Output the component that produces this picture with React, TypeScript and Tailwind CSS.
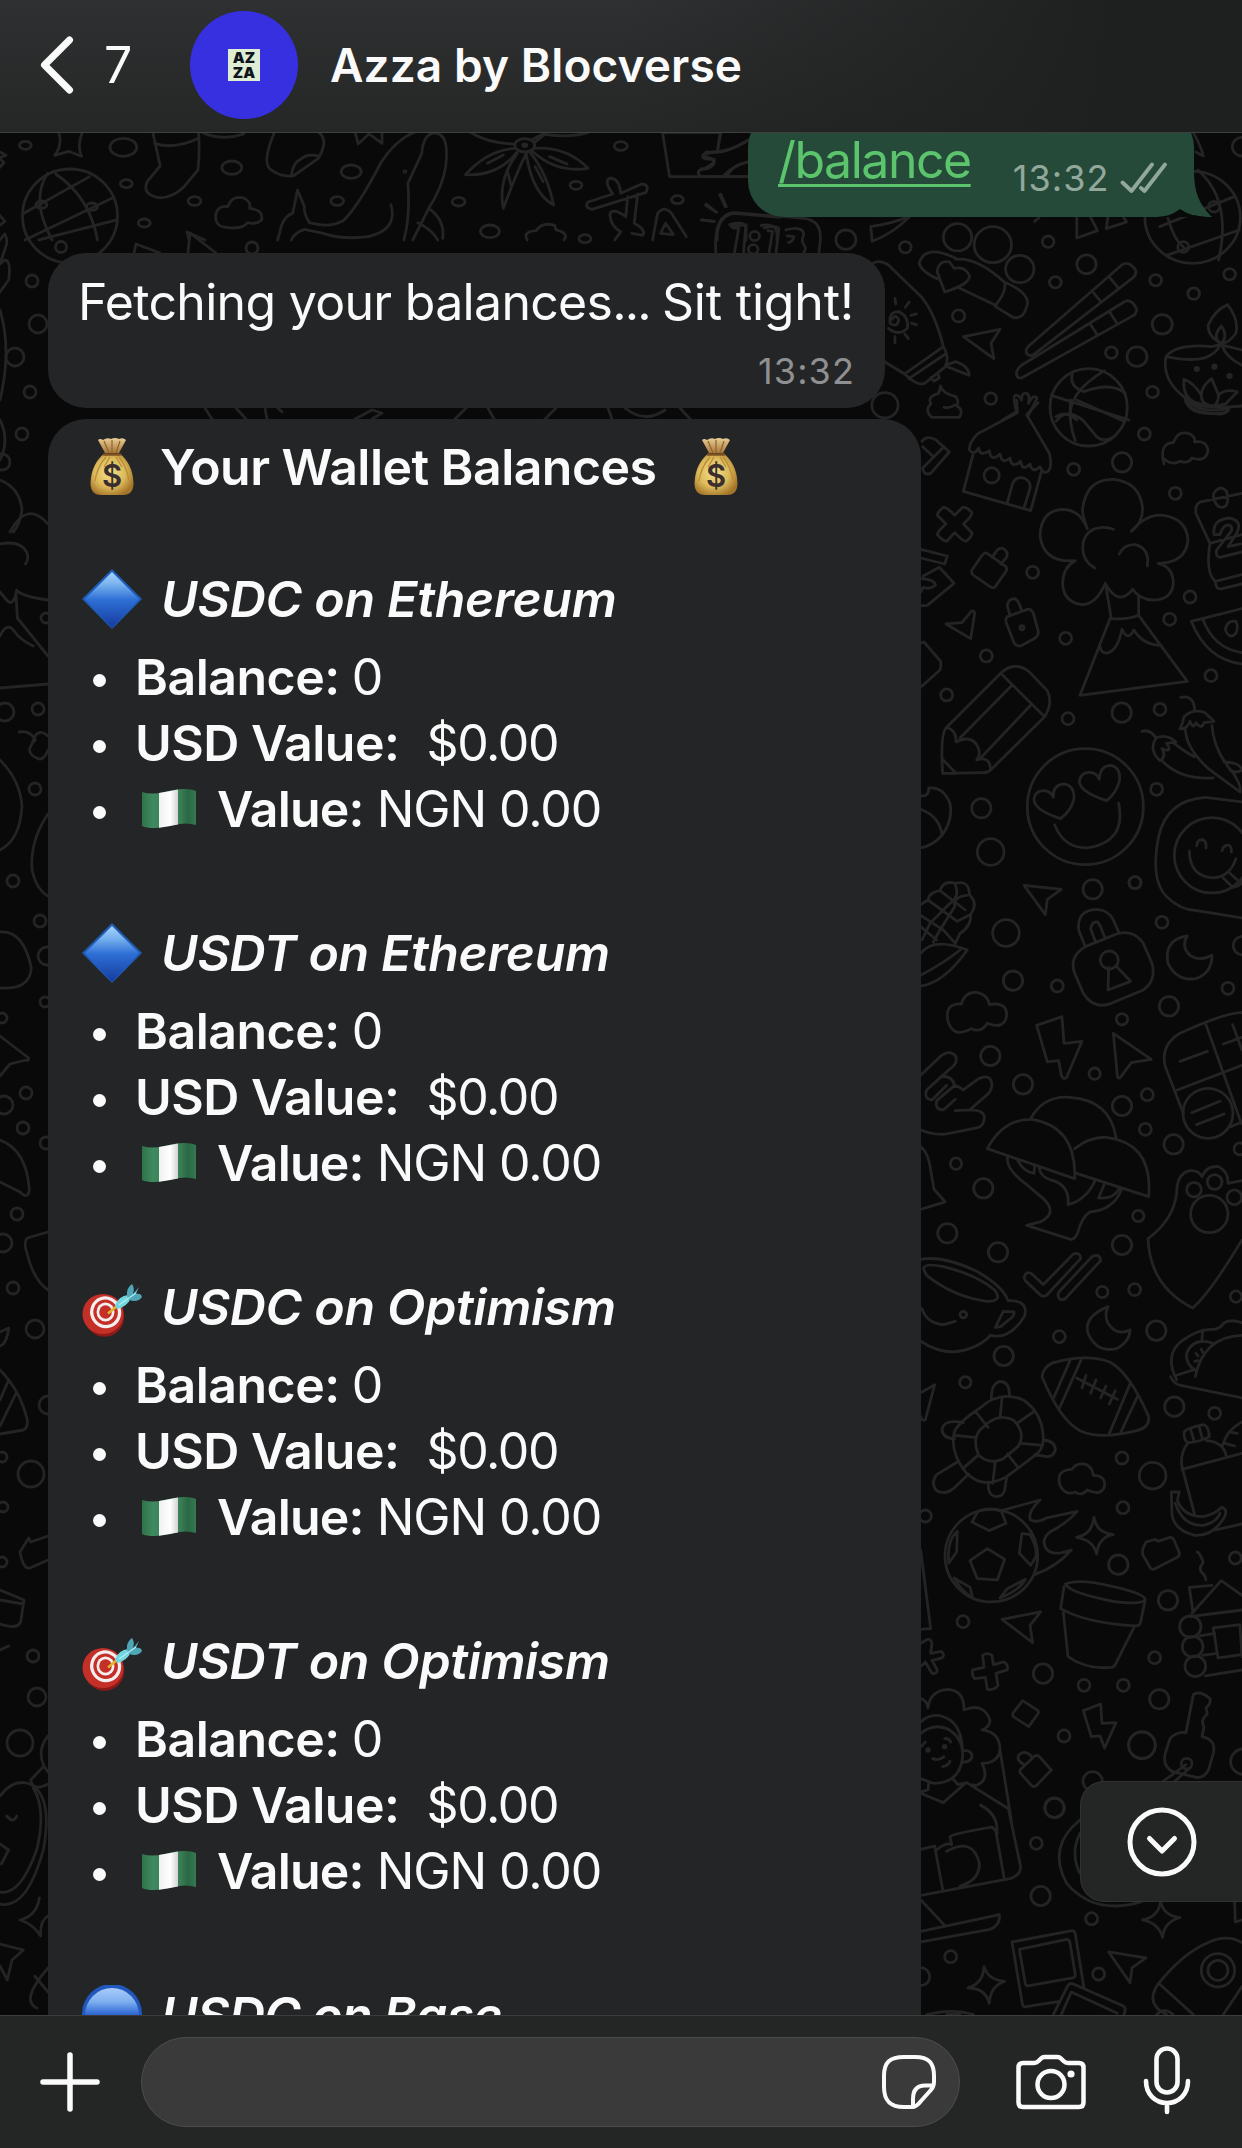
import React from 'react';

interface Holding {
  title: string;
  icon: 'diamond' | 'target' | 'circle';
  tracking: string;
}

interface DoodleGroupProps {
  transform: string;
  paths: string[];
  circles: number[][];
}

const holdings: Holding[] = [
  { title: 'USDC on Ethereum', icon: 'diamond', tracking: 'tracking-[-0.3px]' },
  { title: 'USDT on Ethereum', icon: 'diamond', tracking: 'tracking-[-0.4px]' },
  { title: 'USDC on Optimism', icon: 'target', tracking: 'tracking-[-0.3px]' },
  { title: 'USDT on Optimism', icon: 'target', tracking: 'tracking-[-0.35px]' },
  { title: 'USDC on Base', icon: 'circle', tracking: 'tracking-[-0.7px]' },
];

// Wallpaper doodles, one group per area of the chat background
const doodles: DoodleGroupProps[] = [
  {
    // top left
    transform: 'scale(.4974 .3333)',
    paths: [
      'M118 396Q126 435 110 466L138 454L164 469Q154 435 166 396',
      'M-6 450L12 466L-2 474L8 488L-6 512M-4 640L10 664L-6 682',
      'M307 396L322 498L296 545Q284 585 322 594Q350 590 370 560L398 510Q402 450 399 396M311 430Q350 450 399 415M405 396Q445 425 490 402',
      'M552 396Q525 490 545 510Q565 532 590 528L640 475Q662 420 640 396M640 468Q618 460 604 478Q588 490 586 528',
      'M714 396L720 432L742 402L768 430L768 396',
      'M834 396Q795 420 765 490Q720 620 690 662Q660 685 622 668Q610 640 612 620L598 570Q592 620 588 640Q568 650 562 700L558 720M868 400Q905 390 896 500Q890 560 862 625L830 720M868 400Q850 410 848 460L820 550Q825 650 812 720M786 614Q800 690 740 710Q690 720 650 700L612 688Q590 700 586 720M862 625Q895 660 890 715M840 668Q870 690 880 720',
      'M1058 460Q1035 530 1012 625Q1000 540 1040 460M1066 458Q1100 520 1113 615Q1070 580 1058 462M1076 445Q1140 440 1182 505Q1120 520 1072 456M1036 445Q980 450 936 524Q1000 530 1040 456M1034 432Q980 430 945 396M1074 428L1095 403Q1150 415 1185 396M1068 420L1092 402M1020 512L1028 560M1076 500L1092 545M980 490L1012 465M1105 470L1140 492',
      'M1332 398L1346 530L1504 530M1332 398L1448 398L1442 455M1504 420Q1465 460 1420 456Q1400 480 1436 478Q1438 505 1410 508Q1400 515 1406 524M1504 486Q1475 495 1456 526',
      'M48 640L180 530M50 720L225 595M78 720L235 660M96 520Q60 600 105 720M112 522Q180 590 196 720',
      'M455 682Q430 680 434 640Q440 615 458 620Q466 585 490 594Q505 605 502 625Q530 630 526 660Q515 675 498 668Q485 690 455 682Z',
      'M376 696L380 720M376 696L412 720',
      'M1060 720Q1050 695 1078 692Q1090 665 1115 676L1118 690Q1145 700 1134 720',
      'M1225 535Q1245 532 1248 580L1290 552Q1308 556 1298 578L1190 628Q1174 622 1182 606L1232 582Q1214 545 1225 535ZM1262 590L1258 650Q1230 620 1226 644Q1228 680 1248 695L1236 720M1282 582L1275 670Q1300 690 1292 706L1270 700M1312 720L1322 640Q1335 615 1350 640L1380 710M1328 700L1338 670L1354 704Z',
      'M1420 612L1440 636M1447 584L1458 620M1410 660L1434 664M1442 720Q1440 650 1475 640L1568 652M1470 680L1500 674L1500 720M1530 676Q1560 670 1562 700L1562 720',
    ],
    circles: [[51, 436, 12], [248, 442, 27], [466, 503, 20], [706, 515, 20], [254, 551, 12], [391, 603, 13], [290, 669, 12], [678, 603, 13], [922, 605, 13], [985, 694, 19], [1158, 556, 12], [1362, 599, 12], [1248, 438, 13], [1055, 436, 20], [1055, 436, 4], [83, 614, 11], [185, 620, 11], [814, 515, 2], [1176, 716, 12]],
  },
  {
    // top right
    transform: 'translate(700) scale(.3457 .3333)',
    paths: [
      'M60 583L76 620M16 615L48 637M4 660L42 664M46 760Q38 640 100 638L300 655Q352 660 348 720L344 760M86 674Q130 662 132 684L126 756M96 684L112 684L100 756M186 684Q230 674 228 690L220 756M196 692L210 694L200 756M248 690Q300 676 300 705Q290 725 304 740Q306 752 300 758M252 708L272 710Q268 725 256 728',
      'M494 680Q560 670 606 648M494 680L498 724Q560 700 606 650',
      'M740 775Q650 730 634 790Q640 815 690 838M740 778Q800 770 880 846Q890 870 855 916L750 864M880 846Q960 880 945 920Q935 960 905 952L855 920M708 876L686 815Q690 780 722 786L735 805Q770 798 780 830Q775 855 708 876Z',
      'M1090 652L1090 714L1150 692L1130 652M1180 652L1175 686L1234 666L1225 652M968 664L980 654',
      'M944 1058Q940 1045 960 1030L1220 795Q1240 780 1260 810Q1264 825 1250 835L964 1065Q948 1070 944 1058ZM1186 834L1210 864M1138 878L1160 906M916 1125Q912 1112 930 1096L1230 904Q1250 896 1264 930L1258 944L930 1134Q918 1136 916 1125ZM1186 938L1206 970M1130 974L1150 1006',
      'M500 790Q520 778 545 795L640 890Q680 940 704 1040M704 1040L592 1122M710 1062L604 1136M704 1040Q722 1070 710 1100L650 1150Q630 1160 592 1122L535 1086M710 1096L740 1085Q780 1100 778 1126L715 1100M668 1132L676 1144L692 1134L688 1120',
      'M556 958Q565 940 575 960Q570 985 550 970Q545 935 575 935Q605 950 600 985Q575 1010 545 985M564 895L566 912M605 906L594 922M626 942L610 946M626 974L612 970M603 1016L592 1002M564 1010L564 1028',
      'M762 1010L868 988L842 1030L850 1076Z',
      'M696 1158Q700 1180 740 1190Q752 1210 740 1216Q765 1230 750 1252L670 1252Q648 1230 668 1212Q656 1190 690 1180ZM706 1222Q725 1226 735 1216',
      'M875 1260L915 1235Q905 1190 910 1188Q920 1180 930 1200Q930 1176 945 1180Q955 1185 950 1210Q965 1180 975 1195L948 1250',
      'M1016 1186L1240 1260M1078 1116Q1065 1160 1110 1175Q1190 1145 1230 1180M1170 1112Q1060 1180 1072 1260M1030 1250Q1060 1230 1090 1260',
      'M1526 914Q1560 960 1550 1000Q1530 1030 1508 1030Q1468 1010 1470 975Q1490 930 1526 914ZM1508 978Q1530 1010 1506 1032Q1480 1010 1508 978M1348 1070Q1380 1030 1480 1040L1504 1034L1568 1050M1348 1070Q1420 1085 1460 1074Q1495 1060 1504 1036M1510 1036Q1520 1070 1568 1096M1348 1070Q1335 1140 1402 1192Q1410 1240 1470 1240Q1530 1245 1530 1225M1400 1138Q1395 1190 1430 1206Q1480 1224 1520 1212L1554 1176Q1520 1165 1500 1185L1480 1136Q1450 1160 1450 1185Q1425 1145 1400 1138M1450 1185Q1450 1210 1470 1214M1500 1185Q1500 1205 1490 1214M1402 1192Q1440 1245 1530 1225',
      'M1428 400Q1450 440 1456 468L1434 456M1330 680L1545 590M1350 766L1560 690M1440 510Q1540 600 1500 780M1350 640Q1370 720 1398 740',
      'M0 530L140 530M60 400L50 456Q0 460 10 470Q50 475 36 490Q10 510 4 506M136 424Q70 460 50 456M136 486Q90 500 80 526',
    ],
    circles: [[422, 719, 29], [594, 742, 17], [745, 712, 41], [847, 734, 54], [925, 807, 41], [1007, 725, 17], [1118, 793, 28], [1028, 847, 17], [1318, 841, 17], [1532, 823, 17], [1428, 881, 17], [1337, 973, 29], [1264, 1070, 29], [1190, 1058, 17], [1309, 1176, 17], [841, 1196, 17], [748, 948, 18], [535, 1216, 38], [1425, 652, 138], [1487, 620, 16], [1398, 741, 16], [1568, 440, 28], [158, 708, 14], [154, 748, 14], [1437, 1107, 5], [1488, 1100, 5], [1532, 1128, 5]],
  },
  {
    // house, tree cloud, pencil and smileys
    transform: 'translate(900 400) scale(.3333)',
    paths: [
      'M350 0L352 38L232 102Q206 130 208 150Q222 168 236 144Q240 172 268 152Q272 188 300 162Q306 196 330 174Q334 208 362 184Q366 216 390 192Q396 222 420 200Q430 224 444 214Q458 200 448 160L380 44L414 8M220 160L190 274L392 332L424 216M322 308L338 250Q350 226 376 236Q394 248 390 266L372 324',
      'M468 64Q500 20 550 62L590 110Q610 128 640 112M512 0Q505 70 526 122M530 0L672 64',
      'M856 0Q870 40 960 42Q985 40 985 24M866 4Q900 30 1026 18',
      'M66 124Q80 104 108 120L148 156L92 220Q72 228 68 204L132 140M68 140L98 168',
      'M164 346L188 322Q200 320 216 338Q216 348 190 372L216 398Q216 410 198 424Q188 424 164 398L140 424Q130 424 112 404Q112 394 138 372L112 346Q112 336 130 322Q140 320 164 346Z',
      'M62 448L142 468L134 492L62 474M62 535Q108 540 106 556Q90 570 70 562L62 576M70 528L118 502L162 550L82 616L62 618',
      'M262 460L318 500Q322 508 318 514L286 560Q280 566 270 560L218 524Q212 516 216 510L246 466Q254 456 262 460ZM276 472L292 450Q308 436 320 456Q324 464 318 474L302 492',
      'M322 650L382 628Q394 626 400 640L415 694Q416 706 406 714L362 738Q350 740 342 728L318 666Q316 656 322 650ZM330 646L322 618Q324 596 344 596Q354 600 358 612L366 634',
      'M138 672L186 668L214 634Q222 630 224 640L212 716Z',
      'M62 730L72 726L122 784Q124 800 120 810L62 862',
      'M562 386Q545 340 548 325Q560 236 640 238Q720 246 728 325Q728 370 694 394Q740 340 790 346Q860 356 864 420Q858 490 774 490Q820 500 820 550Q816 600 758 600Q720 598 698 568Q655 622 616 550Q590 612 548 614Q488 606 488 548Q490 500 526 482Q430 490 420 406Q424 330 490 328Q540 330 562 386M640 388Q610 376 580 388Q548 405 548 445Q550 485 584 504M658 462Q672 432 706 434Q750 446 742 498M618 560L634 656Q680 660 716 646L716 586M630 656L540 886L862 844L716 646M600 740Q604 764 626 758Q654 748 666 688Q684 726 702 690Q730 736 784 736',
      'M1026 280L902 306Q884 312 888 340L930 430Q916 520 946 544Q946 570 966 566L1026 552M946 544L1026 524M930 430L1026 404M950 270Q966 256 980 275Q990 318 968 322Q948 325 940 290Q940 276 950 270M942 404Q936 360 986 354Q1030 360 1010 400L984 440L1022 432M942 404L960 404Q970 370 990 376Q1000 386 992 396L950 450Q946 470 960 472L1026 456',
      'M1026 626L874 664Q920 780 1026 792M908 656Q940 745 1026 758M976 690Q980 660 1008 664Q1016 680 1008 700Q990 720 976 690Z',
      'M128 1120Q120 1000 140 982L302 820Q344 780 388 816L442 872Q460 910 434 950L276 1106Q264 1118 250 1118ZM302 820L434 950M336 856L180 1014M392 916L240 1076M140 982Q170 990 168 1026Q210 1005 230 1034Q246 1060 230 1080Q270 1066 272 1110M126 1076L168 1120',
      'M792 192Q776 130 820 128Q836 88 870 102Q886 110 884 126Q920 120 924 152Q918 188 876 174Q866 192 840 184Q816 198 792 176',
      'M482 1256Q400 1230 402 1196Q406 1170 436 1172Q456 1178 460 1192Q458 1156 490 1152Q524 1156 522 1196Q514 1232 482 1256ZM620 1202Q540 1176 538 1144Q544 1112 576 1118Q594 1124 598 1138Q600 1096 634 1096Q664 1104 658 1144Q648 1180 620 1202ZM464 1274Q490 1344 562 1344Q680 1326 656 1210',
      'M842 892Q884 884 884 934M840 986Q850 970 852 950Q880 925 915 938L942 964L912 968Q906 990 888 968Q880 990 870 964Q860 990 840 986M856 990Q860 1050 930 1110L1020 1176Q1026 1160 1000 1120Q940 1050 936 976M726 994Q750 986 768 1014Q800 1000 828 1026L800 1030Q820 1060 786 1046Q800 1070 780 1082Q745 1050 768 1014M786 1082Q840 1140 940 1134M820 1028Q860 1060 884 1070M972 1086Q1020 1088 1026 1110Q1010 1122 990 1110',
      'M62 1188Q88 1190 86 1164Q130 1160 150 1210Q160 1260 126 1306Q100 1336 62 1344M62 1228Q120 1250 126 1306',
      'M1026 1206L916 1192Q800 1200 776 1310Q750 1440 800 1490Q840 1530 890 1532L1026 1554M890 1338Q892 1316 910 1320Q920 1326 918 1344M966 1352Q972 1332 988 1336Q996 1342 994 1356M868 1354Q870 1430 940 1434Q990 1430 1008 1376M970 1434L998 1462Q1020 1460 1026 1446M990 1420L1012 1440',
      'M372 1456L484 1468L442 1498L436 1544Z',
    ],
    circles: [[566, 22, 116], [733, 102, 18], [521, 208, 18], [666, 187, 29], [275, 226, 23], [826, 280, 18], [398, 517, 18], [366, 683, 6], [497, 715, 18], [259, 768, 18], [140, 885, 18], [504, 956, 18], [665, 938, 29], [780, 928, 18], [870, 591, 18], [809, 658, 18], [933, 827, 18], [244, 1225, 29], [272, 1356, 40], [770, 1168, 18], [556, 1220, 174], [936, 1366, 113], [578, 1468, 29], [705, 1448, 18]],
  },
  {
    // corn, padlock, mushrooms and cup
    transform: 'translate(900 860) scale(.3333)',
    paths: [
      'M62 134L84 120Q88 96 120 92Q130 60 166 70Q208 60 208 104Q236 130 212 162Q214 200 180 220L166 250M84 120L172 184L210 164M120 92L196 150M62 166L130 210L166 250M62 200L110 240M166 74Q180 110 150 130L90 190L66 240M200 106Q160 110 164 140L120 210L100 246M62 280Q100 230 202 270Q130 370 62 378M62 346Q130 310 180 270',
      'M556 260L536 210Q530 150 590 148Q626 150 640 180L658 220M586 244L572 206Q576 184 592 186L600 196L616 236M556 260L650 222Q700 206 730 250L756 310Q770 360 730 390L634 430Q580 450 550 400L524 340Q506 290 556 260ZM626 322L624 390L692 364L648 318',
      'M862 228Q790 240 804 310Q830 364 888 356Q936 340 936 286Q900 306 870 286Q842 260 862 228Z',
      'M144 484Q132 430 184 432Q196 392 234 398Q264 406 268 434Q320 424 320 466Q314 510 262 490Q244 520 214 506Q160 536 144 484Z',
      'M410 496L486 470L492 550L546 544L500 652Q490 662 484 646L476 602L442 606Z',
      'M640 520L754 598L694 608L660 654Q652 656 652 646Z',
      'M62 646L120 590Q150 566 168 590Q172 606 160 618L124 650Q156 646 164 676Q180 680 190 690L236 656Q270 640 276 672Q276 690 262 704L208 750Q260 750 252 780Q250 800 230 804L140 822Q100 826 62 810M124 650L80 690Q70 716 96 720L140 676M164 676L110 722Q104 750 130 750L166 718M166 752L208 750',
      'M392 776Q430 706 510 712Q630 720 648 832M262 866Q310 776 396 778Q530 800 524 956ZM524 866Q570 830 620 832Q760 850 746 1010L530 940M322 894Q320 930 380 974L430 1016Q476 1060 420 1086L380 1096L512 1138Q524 1140 534 1116Q546 1070 570 1056Q640 1050 664 990M352 900Q370 936 402 940L404 918M418 926Q422 950 452 960Q510 974 504 1034Q560 1020 586 960M614 970L596 1014Q640 1018 656 988',
      'M62 860Q86 880 92 930L102 988L136 1026L62 1048',
      'M1026 458Q980 456 840 520Q780 556 796 620L850 760M840 604L922 574M918 494L1024 790M832 690L1026 616M998 494L1026 570M970 552L1026 532M876 758L960 724M890 794L972 762M992 800L1026 786',
      'M744 1136Q820 1080 830 1000Q830 940 870 932Q896 930 906 950Q920 916 956 920Q986 936 984 970L1026 962M744 1136Q750 1280 878 1344Q930 1300 1026 1140',
      'M372 1252Q380 1230 396 1242L430 1274L520 1182Q542 1176 542 1196L440 1306Q430 1312 420 1304L376 1262ZM474 1304Q476 1294 486 1286L576 1190Q600 1178 602 1202L496 1316Q476 1326 474 1304Z',
      'M62 1198Q130 1186 230 1234Q310 1280 324 1322M70 1226Q74 1208 130 1220Q230 1244 284 1290Q310 1326 260 1324Q160 1310 80 1246ZM66 1346Q80 1390 130 1394L166 1384M324 1322Q386 1320 374 1368Q330 1440 272 1426M62 1444Q110 1476 160 1476Q230 1470 272 1426M310 1354L342 1356Q344 1364 336 1372L302 1400L286 1402Z',
      'M624 1340Q550 1370 564 1420Q590 1480 650 1466Q690 1444 690 1410Q650 1430 624 1390Q612 1366 624 1340Z',
      'M830 1560Q790 1480 850 1440Q890 1410 930 1408Q960 1410 970 1390Q990 1376 1026 1388M1026 1426Q910 1430 886 1550M908 1410L906 1440M940 1450Q880 1430 860 1480Q856 1510 884 1530M888 1480L894 1488M884 1504L894 1502M904 1468L908 1476M830 1546L880 1530',
    ],
    circles: [[591, 200, 0], [705, 68, 18], [786, 187, 18], [318, 219, 40], [339, 362, 29], [472, 378, 18], [666, 478, 17], [807, 439, 29], [984, 385, 18], [271, 588, 29], [369, 673, 29], [584, 641, 17], [742, 704, 18], [666, 738, 29], [736, 808, 18], [821, 853, 29], [168, 911, 17], [250, 985, 29], [715, 1068, 17], [666, 1155, 29], [142, 1120, 29], [294, 1177, 29], [607, 1296, 17], [704, 1289, 18], [478, 1430, 18], [769, 1412, 29], [1020, 867, 18], [1008, 1310, 17], [1028, 257, 28], [628, 300, 27], [924, 760, 75], [882, 989, 22], [944, 966, 22], [1003, 1012, 22], [928, 1062, 56], [190, 1364, 10]],
  },
  {
    // turtle, balls, pot and cabin
    transform: 'translate(900 1340) scale(.3333)',
    paths: [
      'M426 110Q430 80 460 68Q560 40 630 66Q690 100 746 230Q750 262 710 272Q600 300 540 272Q480 240 426 110ZM510 62L460 176M544 58L476 210M690 132L626 286M714 166L660 282M530 114L652 178M558 106L546 144M588 120L572 160M618 138L602 174M646 152L628 192',
      'M240 204Q300 150 370 180Q430 220 430 300Q430 330 400 350L320 410Q250 450 200 400Q150 340 162 280Q170 250 240 204ZM262 250Q300 220 340 240Q380 280 354 320L310 356Q270 376 236 346Q216 300 240 270ZM274 176Q274 130 300 124Q330 126 328 166M190 248Q130 236 126 270Q130 296 164 296M432 300Q466 304 466 330Q460 352 440 350L404 344M172 366L110 404Q90 430 110 452Q136 466 160 446L206 402M266 426Q260 466 290 470Q310 468 314 450L320 412M306 176L300 234M400 216L354 248M228 216L264 262M164 286L226 292M364 310L428 316M322 342L354 382M234 346L188 386M286 366L278 430',
      'M480 436Q466 390 516 388Q530 366 560 374Q578 384 580 406Q616 406 614 438Q604 470 562 450Q544 470 526 456Q496 468 480 436Z',
      'M268 572L216 546L234 514Q270 500 304 514L318 550ZM262 626L314 658L292 720L232 716L210 662ZM172 574Q140 600 146 670L170 636ZM366 580L390 584Q412 620 408 650L392 676L358 640ZM162 714Q180 750 218 774L210 742ZM376 718Q360 750 300 774L322 746ZM304 512L420 480Q380 520 392 540Q410 550 440 534L532 514Q500 550 450 576Q420 600 440 628Q460 650 514 630Q470 680 404 704',
      'M582 532Q590 580 640 584Q596 590 590 642Q580 600 530 592Q576 584 582 532Z',
      'M728 628L738 606L766 598L774 604L810 592Q818 592 822 600L838 638Q840 646 832 652L762 688Q754 690 750 682L728 644Z',
      'M496 732Q540 714 640 740Q730 760 736 778Q730 796 640 784Q510 760 496 732ZM492 740L482 806Q560 850 710 858Q720 856 722 846L736 778M490 818L504 950Q560 990 636 982Q644 980 650 966L702 862',
      'M306 838L422 816L390 856L398 908Z',
      'M62 630L92 866L62 868',
      'M62 910L72 904Q90 890 96 910L92 940L124 934Q136 944 126 954L96 962L112 990Q110 1004 96 1000L76 966L62 980',
      'M248 946Q262 936 276 946L280 974L312 966Q326 974 322 990L288 1000L294 1036Q284 1052 262 1048L256 1012L224 1016Q214 1004 218 990L252 982Z',
      'M62 158L104 134L76 240Q66 244 62 230',
      'M812 110Q820 134 850 138L1026 174',
      'M852 276Q860 264 910 254Q926 256 928 290Q900 306 866 308Q852 306 852 276ZM872 268L882 302M898 262L908 298M862 312Q840 340 846 380L884 524M920 302Q970 306 978 346M846 388L1026 340M968 316Q980 270 1026 246M988 276L1012 280M976 310L1004 318M814 456L838 456L832 480Q850 530 910 530Q950 520 964 502Q984 506 974 530Q940 590 884 586Q820 570 816 520ZM826 490Q850 560 910 556Q950 548 960 520M946 570L1026 552',
      'M892 636Q900 640 904 654Q914 666 904 676Q896 690 908 700Q916 706 918 720M868 742L936 736M868 742L878 810M876 820L964 722L1026 766M870 830L1026 810M900 888L944 880M940 864L1020 854L1026 950M940 864L954 954L1026 944M908 946L950 940M916 1008L1026 990',
      'M880 1064Q900 1050 930 1076Q934 1090 918 1104L922 1122Q900 1140 912 1160L906 1190Q950 1200 940 1240L926 1290Q910 1320 880 1310L820 1296Q786 1280 796 1240L810 1196Q830 1174 858 1178ZM858 1274L784 1328M872 1282L820 1328',
      'M368 1082L414 1112Q418 1118 412 1124L386 1160L340 1130Q336 1124 340 1118Z',
      'M550 1112L602 1092L606 1150L648 1148L614 1224L600 1188L574 1190Z',
      'M404 1248Q414 1244 420 1252L454 1290L408 1338Q402 1342 394 1336L360 1298Q358 1290 366 1284ZM372 1274Q348 1260 356 1246Q372 1228 392 1246L396 1256',
      'M62 1076Q80 1080 84 1104Q90 1050 146 1048Q194 1054 192 1110Q250 1086 270 1140Q270 1160 246 1170Q300 1176 300 1230Q294 1270 246 1270Q270 1320 230 1336L210 1334M300 1230L334 1440M62 1146Q100 1110 150 1140Q190 1170 188 1250M62 1180Q100 1150 140 1166Q190 1190 188 1250Q180 1330 100 1330L62 1316M190 1232Q216 1230 216 1250Q212 1268 188 1266M86 1330L84 1350L62 1356M160 1318L174 1334L200 1328L322 1404M62 1360L130 1388L196 1330M98 1256Q116 1264 132 1250M134 1196Q146 1194 152 1206M128 1280Q146 1276 150 1264M64 1220L76 1206M242 1396Q270 1410 286 1440',
    ],
    circles: [[311, 48, 29], [196, 127, 17], [823, 200, 29], [944, 220, 18], [666, 354, 18], [758, 407, 40], [669, 503, 18], [655, 674, 29], [804, 781, 29], [76, 528, 18], [189, 845, 18], [429, 1001, 29], [764, 953, 18], [552, 1036, 18], [670, 1036, 18], [778, 1078, 29], [492, 1188, 18], [726, 1215, 40], [578, 1324, 29], [463, 1403, 29], [1006, 654, 18], [274, 647, 139], [871, 860, 32], [878, 920, 31], [886, 979, 31], [860, 1271, 16], [1030, 1265, 38], [84, 1230, 4], [134, 1220, 4]],
  },
  {
    // laptop, photos and rocket
    transform: 'translate(760 1740) scale(.3333)',
    paths: [
      'M745 205L782 380Q782 406 750 416L483 466M662 195Q720 225 710 290M483 328L524 318L548 448M532 328Q560 306 575 314L570 290Q574 282 690 262Q702 260 708 276L732 412M560 334Q640 290 658 370Q660 420 600 438',
      'M483 480L552 554M483 574L718 524Q722 556 690 568L483 606',
      'M672 680Q684 720 734 724Q690 740 688 790Q676 744 624 744Q670 730 672 680Z',
      'M1202 484Q1212 530 1260 532Q1212 546 1208 592Q1196 550 1148 540Q1196 530 1202 484Z',
      'M756 606L936 572Q944 572 946 582L972 744M756 606L788 796Q790 802 798 800L900 784M778 628L920 598Q928 598 930 608L946 704Q946 712 938 714L804 738Q798 738 796 730ZM880 824L924 736Q930 728 940 732L1090 798Q1100 804 1092 824M904 824L934 756L1072 820',
      'M1046 636L1158 654L1116 684L1110 728Z',
      'M1446 608Q1400 580 1340 610Q1270 640 1196 730Q1160 780 1200 812L1220 824M1196 730L1300 824M1446 740L1390 824M1190 824Q1212 800 1240 824',
      'M1424 484L1426 546L1446 540',
      'M500 824Q580 804 640 824M560 824L600 822',
      'M960 240Q860 320 920 430Q980 500 1070 498Q1120 496 1146 484M960 280Q930 340 960 400',
    ],
    circles: [[884, 204, 29], [829, 310, 18], [842, 468, 29], [995, 536, 18], [572, 650, 18], [1016, 702, 18], [482, 710, 27], [1374, 691, 50], [1374, 691, 30], [1146, 16, 40]],
  },
  {
    // left edge
    transform: 'translate(0 440) scale(.3333 1)',
    paths: [
      'M0 40Q60 48 66 70Q60 84 40 92M30 92Q80 60 144 84M0 104Q60 100 80 112Q88 120 76 124M144 160Q60 156 50 150Q40 168 20 160L0 152M48 154L52 178L144 216M0 196Q20 182 40 190Q60 200 100 206M0 248L144 244',
      'M58 292Q90 290 106 300Q70 312 110 318Q130 322 144 310M144 296Q110 286 96 304M0 320Q60 340 66 366Q60 400 0 410M144 374Q90 400 96 430Q110 450 144 456',
      'M0 492Q70 490 94 528Q90 550 0 548M0 596L86 618Q86 622 78 620L30 624L0 636M0 700Q80 710 88 750Q84 760 60 752L0 742M144 792L82 798Q70 802 80 812Q100 840 144 850M0 892L26 888Q20 904 0 906',
      'M0 930Q60 950 82 980Q84 988 70 990L0 994M50 952L0 986M26 940L0 960M144 1096L92 1102L86 1098L60 1112Q70 1130 90 1128L144 1120M0 1150L72 1160L62 1182Q50 1190 0 1184M0 1160L70 1164M0 1210L26 1206',
      'M144 1296Q110 1310 132 1326L92 1340Q100 1352 144 1344M132 1326L144 1332M0 1356Q40 1338 90 1344Q160 1356 130 1410Q80 1470 0 1464M100 1348Q140 1370 110 1410Q60 1456 0 1452M20 1376Q40 1384 50 1376M0 1404L26 1410L4 1424',
      'M118 1458Q110 1476 60 1480Q100 1484 122 1496Q120 1480 144 1476M0 1504L70 1510L36 1520L22 1540L0 1526M144 1528Q60 1560 110 1568M104 1536L144 1552',
      'M0 -20Q30 0 0 20M0 -130Q36 -90 0 -40M0 -176L16 -192Q26 -200 14 -206L0 -200M0 -148L26 -160Q34 -180 14 -180L0 -176',
    ],
    circles: [],
  },
];

// Small rings that run down the left edge, in page pixels
const leftRings = [[38, 709, 6], [5, 712, 9], [35, 789, 6], [13, 881, 6], [40, 921, 6], [2, 1018, 5], [47, 956, 9], [45, 1002, 5], [4, 1105, 9], [26, 1093, 6], [23, 1128, 6], [46, 1143, 6], [17, 1214, 6], [3, 1243, 9], [13, 1288, 6], [35, 1329, 9], [48, 1405, 9], [2, 1457, 5], [31, 1474, 13], [3, 1507, 5], [2, 1562, 5], [33, 1656, 6], [37, 1697, 9], [20, 1743, 13], [32, 281, 6], [38, 324, 9], [15, 357, 9], [30, 392, 6], [22, 434, 6], [2, 462, 8], [252, 248, 6], [46, 618, 5]];

const DoodleGroup: React.FC<DoodleGroupProps> = ({ transform, paths, circles }) => (
  <g transform={transform}>
    {paths.map((d) => (
      <path key={d} d={d} />
    ))}
    {circles.map(([x, y, r]) => (
      <circle key={`${x}-${y}-${r}`} cx={x} cy={y} r={r} />
    ))}
  </g>
);

const Wallpaper: React.FC = () => (
  <svg
    className="absolute inset-x-0 -top-[133px] h-[2148px] w-[1242px] [&_*]:[vector-effect:non-scaling-stroke]"
    viewBox="0 0 1242 2148"
    fill="none"
    stroke="#242424"
    strokeWidth="2.8"
    strokeLinecap="round"
    strokeLinejoin="round"
  >
    {doodles.map((group) => (
      <DoodleGroup key={group.transform} {...group} />
    ))}
    <ellipse cx="70" cy="216" rx="47.5" ry="47" />
    <circle cx="61" cy="247" r="5.5" />
    <path d="M134 253L136 244L160 253M188 253L190 233L216 253" />
    {leftRings.map(([x, y, r]) => (
      <circle key={`${x}-${y}`} cx={x} cy={y} r={r} />
    ))}
    <path d="M205 408L212 419M236 408L246 419M265 408L267 419M278 408L282 412M355 419L372 410L382 413L372 419M466 408L455 419M488 408L494 419M556 408L545 419M608 408L612 419M625 408Q645 424 665 410M680 408L690 419" />
  </svg>
);

const MoneyBag: React.FC = () => (
  <svg className="h-[60px] w-[60px] shrink-0" viewBox="0 0 60 60">
    <defs>
      <radialGradient id="bag" cx=".45" cy=".45" r=".6">
        <stop offset="0" stopColor="#f3e08c" />
        <stop offset=".6" stopColor="#dcb959" />
        <stop offset="1" stopColor="#a5762a" />
      </radialGradient>
      <linearGradient id="neck" x2="0" y2="1">
        <stop offset="0" stopColor="#e8cf96" />
        <stop offset="1" stopColor="#a8763a" />
      </linearGradient>
    </defs>
    <path d="M16 3Q18 1 21 3Q25 0 29 2Q33 0 37 2Q41 0 44 3L37 16H23Z" fill="url(#neck)" />
    <path d="M22 4L27 16M30 3V16M38 4L34 16" stroke="#8f642c" strokeWidth="1.2" fill="none" />
    <path d="M22 17H38C45 22 51 32 51.500 46C51.500 54 48 58 41 58H19C12 58 8.500 54 8.500 46C9 32 15 22 22 17Z" fill="url(#bag)" />
    <path d="M24 20Q15 30 13 44M28 20L22 30M34 20L40 30M37 20Q45 30 47 44" stroke="#b98d3a" strokeWidth="1.300" fill="none" />
    <path d="M22 17.500H38" stroke="#7d5222" strokeWidth="2.500" strokeLinecap="round" />
    <text x="30" y="50" textAnchor="middle" fontSize="31" fontWeight="600" fontFamily="Inter" fill="#3a2f2e">$</text>
  </svg>
);

const DiamondEmoji: React.FC = () => (
  <svg className="h-[60px] w-[60px] shrink-0" viewBox="0 0 60 60">
    <defs>
      <linearGradient id="gem" x2="0" y2="1">
        <stop offset="0" stopColor="#a9d4fa" />
        <stop offset=".22" stopColor="#78b2ee" />
        <stop offset=".5" stopColor="#2e6fd6" />
        <stop offset="1" stopColor="#163a9c" />
      </linearGradient>
    </defs>
    <path d="M30 0L60 30L30 60L0 30Z" fill="#1d5cb8" />
    <path d="M30 3L57 30L30 59L3 30Z" fill="url(#gem)" />
  </svg>
);

const TargetEmoji: React.FC = () => (
  <svg className="h-[60px] w-[60px] shrink-0" viewBox="0 0 60 60">
    <ellipse cx="22" cy="39" rx="20" ry="21" transform="rotate(-25 22 39)" fill="#8e1a17" />
    <ellipse cx="21" cy="37" rx="20.500" ry="20" fill="#c42f27" />
    <ellipse cx="23.500" cy="35.500" rx="15.500" ry="16" transform="rotate(-20 23 35)" fill="#f4eeee" />
    <ellipse cx="23.500" cy="35.500" rx="12.200" ry="12.700" transform="rotate(-20 23 35)" fill="#c42f27" />
    <ellipse cx="23.500" cy="35" rx="9" ry="9.500" fill="#f4eeee" />
    <ellipse cx="23.500" cy="35" rx="6.300" ry="6.700" fill="#c42f27" />
    <path d="M26 36.500L35 29" stroke="#e0b429" strokeWidth="2.600" />
    <path d="M33 28Q37 19 46 18L49 21Q45 30 35 32Z" fill="#74d5de" />
    <path d="M45 19Q44 11 50 7Q53 11 51 17L57 10L54 17Q59 16 60 20Q56 26 47 23Z" fill="#4fa6b6" />
    <path d="M37 28L54 16" stroke="#a9eef2" strokeWidth="1.400" />
  </svg>
);

const CircleEmoji: React.FC = () => (
  <svg className="h-[60px] w-[60px] shrink-0" viewBox="0 0 60 60">
    <defs>
      <linearGradient id="ball" x2="0" y2="1">
        <stop offset="0" stopColor="#a9ccf8" />
        <stop offset=".25" stopColor="#7fb0f0" />
        <stop offset=".5" stopColor="#2a63d2" />
        <stop offset="1" stopColor="#1c4fc0" />
      </linearGradient>
    </defs>
    <circle cx="30" cy="29" r="30" fill="#2257bd" />
    <circle cx="30" cy="30" r="27" fill="url(#ball)" />
  </svg>
);

const NigeriaFlag: React.FC = () => (
  <svg className="ml-[7px] mb-[3px] h-[40px] w-[54px] shrink-0" viewBox="0 0 54 40">
    <defs>
      <linearGradient id="green" x2="1" y2="0">
        <stop offset="0" stopColor="#2f7248" />
        <stop offset=".2" stopColor="#3f8a60" />
        <stop offset=".5" stopColor="#377d53" />
        <stop offset=".7" stopColor="#3c8058" />
        <stop offset=".85" stopColor="#2a6843" />
        <stop offset="1" stopColor="#347951" />
      </linearGradient>
      <linearGradient id="white" x2="1" y2="0">
        <stop offset="0" stopColor="#f1f1f3" />
        <stop offset=".6" stopColor="#ffffff" />
        <stop offset="1" stopColor="#d3d3d6" />
      </linearGradient>
    </defs>
    <path d="M0 4Q10 7 22 4T42 1Q50 1 54 3V37Q44 34 32 37T12 40Q4 40 0 38Z" fill="url(#green)" />
    <path d="M17 5Q27 3 36 1.500V36.500Q27 38.500 17 39.700Z" fill="url(#white)" />
  </svg>
);

const icons = {
  diamond: DiamondEmoji,
  target: TargetEmoji,
  circle: CircleEmoji,
};

const Bullet: React.FC = () => (
  <span className="ml-[11px] mr-[29px] mt-[7px] h-[13px] w-[13px] shrink-0 rounded-full bg-[#fafafa]" />
);

const HoldingSection: React.FC<Holding> = ({ title, icon, tracking }) => {
  const Icon = icons[icon];
  return (
    <section className="mb-[78px]">
      <h3 className="mb-3 flex h-[66px] items-center gap-[19px] font-semibold italic">
        <Icon />
        <span className={tracking}>{title}</span>
      </h3>
      <ul>
        <li className="flex h-[66px] items-center">
          <Bullet />
          <span className="font-semibold tracking-[-0.5px]">Balance:</span>
          <span className="ml-3">0</span>
        </li>
        <li className="flex h-[66px] items-center">
          <Bullet />
          <span className="font-semibold tracking-[-0.5px]">USD Value:</span>
          <span className="ml-[27px] tracking-[-1.4px]">$0.00</span>
        </li>
        <li className="flex h-[66px] items-center">
          <Bullet />
          <NigeriaFlag />
          <span className="ml-[21px] font-semibold tracking-[-0.8px]">Value:</span>
          <span className="ml-[13px] tracking-[-1.1px]">NGN 0.00</span>
        </li>
      </ul>
    </section>
  );
};

const Header: React.FC = () => (
  <header className="flex h-[133px] shrink-0 items-center border-b border-[#3f3f40] bg-linear-to-b from-[#2f3031] to-[#252626]">
    <div className="flex h-full w-full items-center bg-linear-to-r from-transparent from-50% to-[#1e1f1f] to-90% pb-[2px] pl-[39px]">
      <svg className="h-[60px] w-[38px]" viewBox="0 0 38 60" fill="none" stroke="#fafafa" strokeWidth="7" strokeLinecap="round" strokeLinejoin="round">
        <path d="M30.500 5L5.500 30L30.500 55" />
      </svg>
      <span className="ml-[27px] w-[86px] text-[50px] text-[#fafafa]">7</span>
      <div className="flex h-[108px] w-[108px] items-center justify-center rounded-full bg-[#3730e0]">
        <div className="flex h-8 w-8 flex-col items-center justify-center bg-[#dfeed2] text-[15px] leading-[15px] font-black text-[#10141c]">
          <span>AZ</span>
          <span>ZA</span>
        </div>
      </div>
      <h1 className="ml-8 text-[46px] font-semibold tracking-[0.1px] text-[#fafafa]">Azza by Blocverse</h1>
    </div>
  </header>
);

const Composer: React.FC = () => (
  <footer className="flex h-[133px] shrink-0 items-center border-t border-[#3b3d3c] bg-[#242625] pl-10 text-[#fafafa]">
    <svg className="h-[60px] w-[60px]" viewBox="0 0 60 60" fill="none" stroke="currentColor" strokeWidth="5.5" strokeLinecap="round">
      <path d="M30 3V57M3 30H57" />
    </svg>
    <div className="ml-[41px] flex h-[90px] w-[819px] items-center justify-end rounded-full border border-[#4c4c4c] bg-[#3a3a3a] pr-[22px]">
      <svg className="h-[56px] w-[56px]" viewBox="0 0 56 56" fill="none" stroke="currentColor" strokeWidth="4" strokeLinecap="round" strokeLinejoin="round">
        <path d="M31 53H23C9 53 3 47 3 33V22C3 8 9 3 23 3H34C48 3 53 9 53 22V28C53 32 52 34 49 37L40 47C37 51 35 53 31 53ZM32 53V45C32 36 36 31.500 44 31.500H52" />
      </svg>
    </div>
    <svg className="ml-14 h-[56px] w-[70px]" viewBox="0 0 70 56" fill="none" stroke="currentColor" strokeWidth="4.5" strokeLinejoin="round">
      <path d="M7 9H18C20 9 21 8.500 22.500 7L25 4.500C26 3.500 27 3 28.500 3H41.500C43 3 44 3.500 45 4.500L47.500 7C49 8.500 50 9 52 9H63C66 9 67.500 10.500 67.500 13.500V48.500C67.500 51.500 66 53 63 53H7C4 53 2.500 51.500 2.500 48.500V13.500C2.500 10.500 4 9 7 9Z" />
      <circle cx="35" cy="30.500" r="13.500" />
      <circle cx="55" cy="20" r="3.600" fill="currentColor" stroke="none" />
    </svg>
    <svg className="mb-1 ml-[57px] h-[70px] w-12" viewBox="0 0 48 70" fill="none" stroke="currentColor" strokeWidth="4.6" strokeLinecap="round">
      <rect x="13.500" y="3.500" width="21" height="44" rx="10.500" />
      <path d="M3 36C3 49 12 58 24 58S45 49 45 36M24 58V67" />
    </svg>
  </footer>
);

const App: React.FC = () => {
  return (
    <div className="flex h-[2148px] w-[1242px] flex-col overflow-hidden bg-[#090909] font-['Inter',sans-serif]">
      <Header />
      <main className="relative min-h-0 flex-1 overflow-hidden">
        <Wallpaper />
        <div className="relative flex flex-col items-start text-[50px] leading-[66px] whitespace-nowrap text-[#fafafa]">
          <div className="relative -mt-[22px] mr-[48px] mb-[36px] flex h-[106px] w-[446px] self-end rounded-[36px] rounded-br-none bg-[#254a39] pt-4 pl-[30px]">
            <span className="tracking-[-1.5px] text-[#5bc46c] underline decoration-[2.5px] underline-offset-[6px] [text-decoration-skip-ink:auto]">/balance</span>
            <span className="mt-[27px] ml-[42px] text-[36px] leading-[48px] tracking-[1.1px] text-[#93a89c]">13:32</span>
            <svg className="mt-[34px] ml-[10px] h-9 w-[48px]" viewBox="0 0 48 36" fill="none" stroke="#93a89c" strokeWidth="3.8" strokeLinecap="round" strokeLinejoin="round">
              <path d="M2.500 21.500L11.500 30L32 3.500M21 27L24.500 30L45 3.500" />
            </svg>
            <svg className="absolute -right-[18px] bottom-0 h-[46px] w-[60px]" viewBox="0 0 60 46">
              <path d="M28 0H42C42 22 48 34 60 46C48 46 37 44 28 38V0Z" fill="#254a39" />
              <path d="M0 46C14 46 20 44 28 38C37 44 44 45.500 52 46Z" fill="#090909" />
            </svg>
          </div>
          <div className="ml-12 flex h-[155px] w-[837px] flex-col rounded-[38px] bg-[#242527] px-[30px] pt-4">
            <p className="tracking-[-0.7px]">
              Fetching your balances
              <span className="tracking-[-1.9px]">... </span>
              <span className="tracking-[-0.2px]">Sit tight!</span>
            </p>
            <span className="mt-3 self-end text-[36px] leading-[48px] tracking-[1.1px] text-[#8f9091]">13:32</span>
          </div>
          <div className="mt-[11px] ml-12 w-[873px] rounded-t-[38px] bg-[#242527] pt-[15px] pl-[34px]">
            <h2 className="mb-[66px] flex h-[66px] items-center font-semibold">
              <MoneyBag />
              <span className="ml-[18px] tracking-[-0.55px]">Your Wallet Balances</span>
              <span className="ml-[30px] flex">
                <MoneyBag />
              </span>
            </h2>
            {holdings.map((holding) => (
              <HoldingSection key={holding.title} {...holding} />
            ))}
          </div>
        </div>
        <button className="absolute top-[1648px] right-0 flex h-[121px] w-[162px] items-center rounded-l-[24px] border border-r-0 border-[#303231] bg-[#242625] pl-[46px]">
          <svg className="h-[70px] w-[70px]" viewBox="0 0 70 70" fill="none" stroke="#fafafa" strokeWidth="5" strokeLinecap="round" strokeLinejoin="round">
            <circle cx="35" cy="35" r="32" />
            <path d="M22.500 31.500L35 44L47.500 31.500" />
          </svg>
        </button>
      </main>
      <Composer />
    </div>
  );
};

export default App;
